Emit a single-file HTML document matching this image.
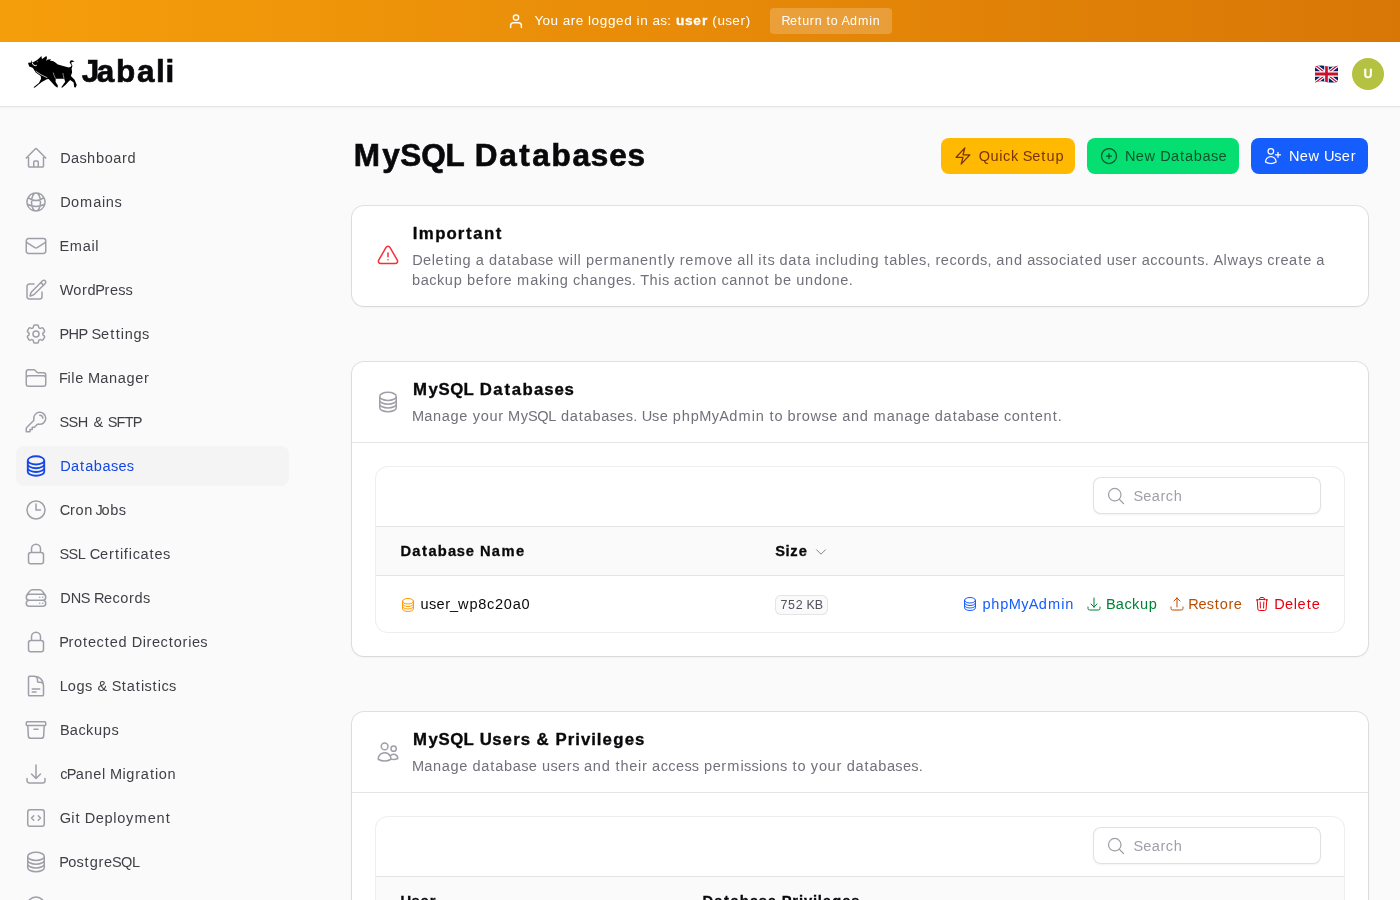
<!DOCTYPE html><html><head><meta charset="utf-8">
<style>
*{box-sizing:border-box;margin:0;padding:0}
html{will-change:transform}
html,body{width:1400px;height:900px;overflow:hidden}
body{background:#fafafa;font-family:"Liberation Sans",sans-serif;color:#09090b;position:relative;font-size:14px;line-height:20px}
.abs{position:absolute}
svg{display:block}
.ic{fill:none;stroke:currentColor;stroke-width:1.5;stroke-linecap:round;stroke-linejoin:round}
/* banner */
#banner{left:0;top:0;width:1400px;height:42px;background:linear-gradient(to right,#f59e0b,#d97706);color:#fff}
#banner .txt{left:536px;top:11px;font-size:13px;line-height:20px;white-space:nowrap}
#banner .btn{left:770px;top:8px;width:122px;height:26px;border-radius:4px;background:rgba(255,255,255,.2);font-size:12px;line-height:26px;text-align:center;white-space:nowrap}
/* header */
#hdr{left:0;top:42px;width:1400px;height:65px;background:#fff;border-bottom:1px solid #e5e5e5;box-shadow:0 1px 2px rgba(0,0,0,.04)}
#logo-t{left:85px;top:12px;font-size:30px;line-height:36px;font-weight:700;letter-spacing:-0.75px;white-space:nowrap}
.avatar{left:1352px;top:16px;width:32px;height:32px;border-radius:50%;background:#b5c140;color:#fff;font-size:12px;font-weight:700;text-align:center;line-height:32px}
/* sidebar */
.nav{left:16px;width:273px;height:40px;border-radius:8px;color:#3f3f46;white-space:nowrap}
.nav svg{position:absolute;left:8px;top:8px;width:24px;height:24px;color:#9f9fa9}
.nav span{position:absolute;left:44px;top:10px;font-size:14px;line-height:20px}
.nav.act{background:#f4f4f5;color:#1447e6}
.nav.act svg{color:#1447e6}
/* main */
h1{position:absolute;left:352px;top:138px;font-size:30px;line-height:36px;font-weight:700;letter-spacing:-0.75px;white-space:nowrap;color:#09090b}
.btn{position:absolute;top:138px;height:36px;border-radius:8px;white-space:nowrap;font-size:14px;line-height:20px}
.btn svg{position:absolute;left:12px;top:8px;width:20px;height:20px}
.btn span{position:absolute;left:38px;top:8px}
.card{position:absolute;left:352px;width:1016px;background:#fff;border-radius:12px;box-shadow:0 0 0 1px rgba(9,9,11,.1),0 1px 3px rgba(0,0,0,.06)}
.hd-ic{position:absolute;left:24px;width:24px;height:24px;color:#9f9fa9}
.hd-t{position:absolute;left:60px;font-size:16px;line-height:24px;font-weight:700;white-space:nowrap}
.hd-d{position:absolute;left:60px;font-size:14px;line-height:20px;color:#71717b;width:932px}
.sep{position:absolute;left:0;width:1016px;height:1px;background:#e4e4e7}
.inner{position:absolute;left:24px;width:968px;background:#fff;border-radius:12px;box-shadow:0 0 0 1px rgba(9,9,11,.07)}
.search{position:absolute;left:717px;top:10px;width:228px;height:37px;border-radius:8px;background:#fff;box-shadow:inset 0 0 0 1px rgba(9,9,11,.12),0 1px 2px rgba(0,0,0,.05)}
.search svg{position:absolute;left:13px;top:8.5px;width:20px;height:20px;color:#9f9fa9}
.search span{position:absolute;left:41px;top:8.5px;color:#9f9fa9;font-size:14px;line-height:20px;white-space:nowrap}
.thead{position:absolute;left:0;width:968px;height:50px;background:#fafafa;border-top:1px solid #e4e4e7;border-bottom:1px solid #e4e4e7}
.th{position:absolute;top:14px;font-size:14px;line-height:20px;font-weight:700;white-space:nowrap}
.act-l{position:absolute;top:0;height:20px;font-size:14px;line-height:20px;white-space:nowrap}
.act-l svg{position:absolute;left:0;top:2px;width:16px;height:16px}
.act-l span{position:absolute;left:20px;top:0}

body{font-kerning:none}
i{font-style:normal}</style></head><body>

<!-- banner -->
<div id="banner" class="abs">
  <svg class="abs" style="left:504px;top:10px;width:24px;height:22px" viewBox="0 0 24 22"><circle cx="12" cy="7.6" r="2.65" fill="none" stroke="#fff" stroke-width="1.35"></circle><path d="M6.6,17.6 V15.6 Q6.6,12.7 9.6,12.7 H14.4 Q17.4,12.7 17.4,15.6 V17.6" fill="none" stroke="#fff" stroke-width="1.45" stroke-linecap="round"></path></svg>
  <div class="abs txt" style="font-size: 13.52px;"><i style="letter-spacing: -1.19px; margin-left: -1.4px;">Y</i><i style="letter-spacing: 0.58px;">o</i><i style="letter-spacing: 0.55px;">u</i><i style="letter-spacing: 0.41px;"> </i><i style="letter-spacing: 0.51px;">a</i><i style="letter-spacing: 0.52px;">r</i><i style="letter-spacing: 0.43px;">e</i><i style="letter-spacing: 0.48px;"> </i><i style="letter-spacing: 0.52px;">l</i><i style="letter-spacing: 0.59px;">o</i><i style="letter-spacing: 0.73px;">g</i><i style="letter-spacing: 0.61px;">g</i><i style="letter-spacing: 0.61px;">e</i><i style="letter-spacing: 0.56px;">d</i><i style="letter-spacing: 0.5px;"> </i><i style="letter-spacing: 0.66px;">i</i><i style="letter-spacing: 0.55px;">n</i><i style="letter-spacing: 0.42px;"> </i><i style="letter-spacing: 0.23px;">a</i><i style="letter-spacing: 0.31px;">s</i><i style="letter-spacing: 0.5px;">:</i><i style="letter-spacing: 0.2px;"> </i><b style="font-size: 13.65px; -webkit-text-stroke: 0.279px;"><i style="letter-spacing: 0.54px; margin-left: 0.46px;">u</i><i style="letter-spacing: 0.69px;">s</i><i style="letter-spacing: 1.16px;">e</i><i style="letter-spacing: 0.55px;">r</i></b><i style="letter-spacing: 0.48px; margin-left: 0.19px;"> </i><i style="letter-spacing: 0.65px;">(</i><i style="letter-spacing: 0.37px;">u</i><i style="letter-spacing: 0.24px;">s</i><i style="letter-spacing: 0.66px;">e</i><i style="letter-spacing: 0.71px;">r</i><i style="letter-spacing: 0.29px;">)</i></div>
  <div class="abs btn" style="font-size: 12.48px;"><i style="letter-spacing: -0.38px; margin-left: -0.6px;">R</i><i style="letter-spacing: 0.84px;">e</i><i style="letter-spacing: 0.96px;">t</i><i style="letter-spacing: 0.62px;">u</i><i style="letter-spacing: 0.62px;">r</i><i style="letter-spacing: 0.52px;">n</i><i style="letter-spacing: 0.8px;"> </i><i style="letter-spacing: 0.82px;">t</i><i style="letter-spacing: 0.38px;">o</i><i style="letter-spacing: 0.02px;"> </i><i style="letter-spacing: 0.19px;">A</i><i style="letter-spacing: 1px;">d</i><i style="letter-spacing: 0.93px;">m</i><i style="letter-spacing: 0.61px;">i</i><i style="letter-spacing: 0.34px;">n</i></div>
</div>

<!-- header -->
<div id="hdr" class="abs">
  <svg class="abs" style="left:24px;top:10px;width:58px;height:40px" viewBox="0 0 58 40">
    <path fill="#000" d="M4.1,11.3 L4.4,10.8 L7.1,10.5 L7.3,8.1 L8.1,10.6 L9.2,10.2 L13.1,8.1 L14.9,6.6 L17.4,4.1 L17.8,6.6 L18.1,7 L19.2,6.3 L22.4,4 L23,5.9 L22.1,8.8 L23.9,7.4 L27.1,7.2 L26,8.8 L28.9,9.1 L31,10.2 L33.9,12.4 L40,14.2 L44.9,15.6 L46.8,14.8 L47.6,13.2 L46.4,11.8 L45.6,10.2 L46.6,8.6 L48.1,8.3 L50.6,9.4 L48.5,9.9 L47.2,10.6 L47.5,11.8 L48.4,13.4 L48.1,15.2 L47.6,16.5 L48.1,20.3 L46.9,23.9 L50.6,27.8 L52.8,33.1 L51.4,35.7 L50.2,34.9 L49.6,30.5 L46.2,28 L44.6,29.6 L41.7,32.8 L38.1,35.8 L37.3,35.3 L41.2,29.8 L40.2,26.7 L38.9,26.7 L31.7,26.7 L31.6,30 L33.9,33.4 L33.5,35.7 L31,34 L27.4,30 L24.6,26.9 L22.8,27.2 L17.8,30 L10.6,35.7 L9.5,35.3 L14.9,31 L17.1,26.7 L16.7,23.9 L11.7,20.6 L8.9,16 L7.3,15.3 L5.2,14.5 Z"></path>
    <path fill="none" stroke="#fff" stroke-width="1" stroke-linecap="round" d="M8.3,11.2 Q9,13.6 11.3,13.7 L12.4,13.3"></path><circle cx="13.5" cy="9.7" r="0.45" fill="#fff"></circle>
    <path fill="none" stroke="#fff" stroke-width="0.7" stroke-linecap="round" d="M12,19.4 L17,22.7 L23,25.6"></path>
    <path fill="none" stroke="#fff" stroke-width="0.5" d="M29.2,20.6 L30.2,23.5 L31.5,26.6 M38.9,21 L39.3,23.5 L40.1,26.6"></path>
  </svg>
  <div id="logo-t" class="abs" style="font-size: 31.5px; -webkit-text-stroke: 0.643px;"><i style="letter-spacing: -2.57px; margin-left: -3.18px; position: relative; top: -1px;">J</i><i style="letter-spacing: 1.73px; position: relative; top: -1px;">a</i><i style="letter-spacing: 1.73px; position: relative; top: -1px;">b</i><i style="letter-spacing: 1.38px; position: relative; top: -1px;">a</i><i style="letter-spacing: 0.79px; position: relative; top: -1px;">l</i><i style="letter-spacing: 0.02px; position: relative; top: -1px;">i</i></div>
  <svg class="abs" style="left:1315px;top:23px;width:23px;height:18px" viewBox="0 0 60 40" preserveAspectRatio="none">
    <clipPath id="fl"><path d="M0,3 Q15,-1 30,2.5 T60,1.5 L60,37 Q45,41 30,37.5 T0,39 Z"></path></clipPath>
    <g clip-path="url(#fl)">
      <rect width="60" height="40" fill="#012169"></rect>
      <path d="M0,0 L60,40 M60,0 L0,40" stroke="#fff" stroke-width="8"></path>
      <path d="M0,0 L60,40 M60,0 L0,40" stroke="#C8102E" stroke-width="3"></path>
      <path d="M30,0 V40 M0,20 H60" stroke="#fff" stroke-width="12"></path>
      <path d="M30,0 V40 M0,20 H60" stroke="#C8102E" stroke-width="7"></path>
    </g>
  </svg>
  <div class="abs avatar" style="font-size: 12.6px; -webkit-text-stroke: 0.257px;"><i style="letter-spacing: 0.32px; margin-left: 0.32px;">U</i></div>
</div>

<!-- sidebar -->
<div class="abs nav" style="top:138px"><svg class="ic" viewBox="0 0 24 24"><path d="m2.25 12 8.954-8.955c.44-.439 1.152-.439 1.591 0L21.75 12M4.5 9.75v10.125c0 .621.504 1.125 1.125 1.125H9.75v-4.875c0-.621.504-1.125 1.125-1.125h2.25c.621 0 1.125.504 1.125 1.125V21h4.125c.621 0 1.125-.504 1.125-1.125V9.75M8.25 21h8.25"></path></svg><span style="font-size: 14.56px;"><i style="letter-spacing: 0.38px; margin-left: 0.13px;">D</i><i style="letter-spacing: 0.26px;">a</i><i style="letter-spacing: 0.41px;">s</i><i style="letter-spacing: 0.79px;">h</i><i style="letter-spacing: 0.64px;">b</i><i style="letter-spacing: 0.48px;">o</i><i style="letter-spacing: 0.58px;">a</i><i style="letter-spacing: 0.73px;">r</i><i style="letter-spacing: 0.4px;">d</i></span></div>
<div class="abs nav" style="top:182px"><svg class="ic" viewBox="0 0 24 24"><path d="M12 21a9.004 9.004 0 0 0 8.716-6.747M12 21a9.004 9.004 0 0 1-8.716-6.747M12 21c2.485 0 4.5-4.03 4.5-9S14.485 3 12 3m0 18c-2.485 0-4.5-4.03-4.5-9S9.515 3 12 3m0 0a8.997 8.997 0 0 1 7.843 4.582M12 3a8.997 8.997 0 0 0-7.843 4.582m15.686 0A11.953 11.953 0 0 1 12 10.5c-2.998 0-5.74-1.1-7.843-2.918m15.686 0A8.959 8.959 0 0 1 21 12c0 .778-.099 1.533-.284 2.253m0 0A17.919 17.919 0 0 1 12 16.5c-3.162 0-6.133-.815-8.716-2.247m0 0A9.015 9.015 0 0 1 3 12c0-1.605.42-3.113 1.157-4.418"></path></svg><span style="font-size: 14.56px;"><i style="letter-spacing: 0.38px; margin-left: 0.13px;">D</i><i style="letter-spacing: 1px;">o</i><i style="letter-spacing: 1px;">m</i><i style="letter-spacing: 0.57px;">a</i><i style="letter-spacing: 0.72px;">i</i><i style="letter-spacing: 0.41px;">n</i><i style="letter-spacing: 0.02px;">s</i></span></div>
<div class="abs nav" style="top:226px"><svg class="ic" viewBox="0 0 24 24"><path d="M21.75 6.75v10.5a2.25 2.25 0 0 1-2.25 2.25h-15a2.25 2.25 0 0 1-2.25-2.25V6.75m19.5 0A2.25 2.25 0 0 0 19.5 4.5h-15a2.25 2.25 0 0 0-2.25 2.25m19.5 0v.243a2.25 2.25 0 0 1-1.07 1.916l-7.5 4.615a2.25 2.25 0 0 1-2.36 0L3.32 8.91a2.25 2.25 0 0 1-1.07-1.916V6.75"></path></svg><span style="font-size: 14.56px;"><i style="letter-spacing: 0.33px; margin-left: -0.42px;">E</i><i style="letter-spacing: 0.99px;">m</i><i style="letter-spacing: 0.57px;">a</i><i style="letter-spacing: 0.66px;">i</i><i style="letter-spacing: 0.34px;">l</i></span></div>
<div class="abs nav" style="top:270px"><svg class="ic" viewBox="0 0 24 24"><path d="m16.862 4.487 1.687-1.688a1.875 1.875 0 1 1 2.652 2.652L10.582 16.07a4.5 4.5 0 0 1-1.897 1.13L6 18l.8-2.685a4.5 4.5 0 0 1 1.13-1.897l8.932-8.931Zm0 0L19.5 7.125M18 14v4.75A2.25 2.25 0 0 1 15.75 21H5.25A2.25 2.25 0 0 1 3 18.75V8.25A2.25 2.25 0 0 1 5.25 6H10"></path></svg><span style="font-size: 14.56px;"><i style="letter-spacing: -0.12px; margin-left: -0.35px;">W</i><i style="letter-spacing: 0.57px;">o</i><i style="letter-spacing: 0.73px;">r</i><i style="letter-spacing: -0.36px;">d</i><i style="letter-spacing: -0.45px;">P</i><i style="letter-spacing: 0.56px;">r</i><i style="letter-spacing: 0.27px;">e</i><i style="letter-spacing: 0.02px;">s</i><i style="letter-spacing: 0.01px;">s</i></span></div>
<div class="abs nav" style="top:314px"><svg class="ic" viewBox="0 0 24 24"><path d="M9.594 3.94c.09-.542.56-.94 1.11-.94h2.593c.55 0 1.02.398 1.11.94l.213 1.281c.063.374.313.686.645.87.074.04.147.083.22.127.325.196.72.257 1.075.124l1.217-.456a1.125 1.125 0 0 1 1.37.49l1.296 2.247a1.125 1.125 0 0 1-.26 1.431l-1.003.827c-.293.241-.438.613-.43.992a7.723 7.723 0 0 1 0 .255c-.008.378.137.75.43.991l1.004.827c.424.35.534.955.26 1.43l-1.298 2.247a1.125 1.125 0 0 1-1.369.491l-1.217-.456c-.355-.133-.75-.072-1.076.124a6.47 6.47 0 0 1-.22.128c-.331.183-.581.495-.644.869l-.213 1.281c-.09.543-.56.94-1.11.94h-2.594c-.55 0-1.019-.398-1.11-.94l-.213-1.281c-.062-.374-.312-.686-.644-.87a6.52 6.52 0 0 1-.22-.127c-.325-.196-.72-.257-1.076-.124l-1.217.456a1.125 1.125 0 0 1-1.369-.49l-1.297-2.247a1.125 1.125 0 0 1 .26-1.431l1.004-.827c.292-.24.437-.613.43-.991a6.932 6.932 0 0 1 0-.255c.007-.38-.138-.751-.43-.992l-1.004-.827a1.125 1.125 0 0 1-.26-1.43l1.297-2.247a1.125 1.125 0 0 1 1.37-.491l1.216.456c.356.133.751.072 1.076-.124.072-.044.146-.086.22-.128.332-.183.582-.495.644-.869l.214-1.28Z"></path><path d="M15 12a3 3 0 1 1-6 0 3 3 0 0 1 6 0Z"></path></svg><span style="font-size: 14.56px;"><i style="letter-spacing: -0.62px; margin-left: -0.62px;">P</i><i style="letter-spacing: -0.62px;">H</i><i style="letter-spacing: -0.42px;">P</i><i style="letter-spacing: -0.2px;"> </i><i style="letter-spacing: -0.15px;">S</i><i style="letter-spacing: 0.98px;">e</i><i style="letter-spacing: 1.44px;">t</i><i style="letter-spacing: 1.05px;">t</i><i style="letter-spacing: 0.73px;">i</i><i style="letter-spacing: 0.79px;">n</i><i style="letter-spacing: 0.41px;">g</i><i style="letter-spacing: 0.02px;">s</i></span></div>
<div class="abs nav" style="top:358px"><svg class="ic" viewBox="0 0 24 24"><path d="M2.25 12.75V12A2.25 2.25 0 0 1 4.5 9.75h15A2.25 2.25 0 0 1 21.75 12v.75m-8.69-6.44-2.12-2.12a1.5 1.5 0 0 0-1.061-.44H4.5A2.25 2.25 0 0 0 2.25 6v12a2.25 2.25 0 0 0 2.25 2.25h15A2.25 2.25 0 0 0 21.75 18V9a2.25 2.25 0 0 0-2.25-2.25h-5.379a1.5 1.5 0 0 1-1.06-.44Z"></path></svg><span style="font-size: 14.56px;"><i style="letter-spacing: -0.59px; margin-left: -0.92px;">F</i><i style="letter-spacing: 0.66px;">i</i><i style="letter-spacing: 0.59px;">l</i><i style="letter-spacing: 0.47px;">e</i><i style="letter-spacing: 0.19px;"> </i><i style="letter-spacing: 0.22px;">M</i><i style="letter-spacing: 0.64px;">a</i><i style="letter-spacing: 0.64px;">n</i><i style="letter-spacing: 0.63px;">a</i><i style="letter-spacing: 0.66px;">g</i><i style="letter-spacing: 0.72px;">e</i><i style="letter-spacing: 0.45px;">r</i></span></div>
<div class="abs nav" style="top:402px"><svg class="ic" viewBox="0 0 24 24"><path d="M15.75 5.25a3 3 0 0 1 3 3m3 0a6 6 0 0 1-7.029 5.912c-.563-.097-1.159.026-1.563.43L10.5 17.25H8.25v2.25H6v2.25H2.25v-2.818c0-.597.237-1.17.659-1.591l6.499-6.499c.404-.404.527-1 .43-1.563A6 6 0 1 1 21.75 8.25Z"></path></svg><span style="font-size: 14.56px;"><i style="letter-spacing: -0.81px; margin-left: -0.41px;">S</i><i style="letter-spacing: -0.4px;">S</i><i style="letter-spacing: 0.22px;">H</i><i style="letter-spacing: 0.81px;"> </i><i style="letter-spacing: 0.8px;">&amp;</i><i style="letter-spacing: -0.2px;"> </i><i style="letter-spacing: -0.95px;">S</i><i style="letter-spacing: -0.7px;">F</i><i style="letter-spacing: -0.79px;">T</i><i style="letter-spacing: -0.63px;">P</i></span></div>
<div class="abs nav act" style="top:446px"><svg class="ic" style="stroke-width:1.8" viewBox="0 0 24 24"><path d="M20.25 6.375c0 2.278-3.694 4.125-8.25 4.125S3.75 8.653 3.75 6.375m16.5 0c0-2.278-3.694-4.125-8.25-4.125S3.75 4.097 3.75 6.375m16.5 0v11.25c0 2.278-3.694 4.125-8.25 4.125s-8.25-1.847-8.25-4.125V6.375m16.5 0v3.75m-16.5-3.75v3.75m16.5 0v3.75C20.25 16.153 16.556 18 12 18s-8.25-1.847-8.25-4.125v-3.75m16.5 0c0 2.278-3.694 4.125-8.25 4.125s-8.25-1.847-8.25-4.125"></path></svg><span style="font-size: 14.56px;"><i style="letter-spacing: 0.38px; margin-left: 0.13px;">D</i><i style="letter-spacing: 0.98px;">a</i><i style="letter-spacing: 0.98px;">t</i><i style="letter-spacing: 0.64px;">a</i><i style="letter-spacing: 0.64px;">b</i><i style="letter-spacing: 0.25px;">a</i><i style="letter-spacing: 0.27px;">s</i><i style="letter-spacing: 0.28px;">e</i><i style="letter-spacing: 0.02px;">s</i></span></div>
<div class="abs nav" style="top:490px"><svg class="ic" viewBox="0 0 24 24"><path d="M12 6v6h4.5m4.5 0a9 9 0 1 1-18 0 9 9 0 0 1 18 0Z"></path></svg><span style="font-size: 14.56px;"><i style="letter-spacing: -0.06px; margin-left: -0.37px;">C</i><i style="letter-spacing: 0.54px;">r</i><i style="letter-spacing: 0.63px;">o</i><i style="letter-spacing: 0.6px;">n</i><i style="letter-spacing: -1.38px;"> </i><i style="letter-spacing: -1.34px;">J</i><i style="letter-spacing: 0.64px;">o</i><i style="letter-spacing: 0.41px;">b</i><i style="letter-spacing: 0.01px;">s</i></span></div>
<div class="abs nav" style="top:534px"><svg class="ic" viewBox="0 0 24 24"><path d="M16.5 10.5V6.75a4.5 4.5 0 1 0-9 0v3.75m-.75 11.25h10.5a2.25 2.25 0 0 0 2.25-2.25v-6.75a2.25 2.25 0 0 0-2.25-2.25H6.75a2.25 2.25 0 0 0-2.25 2.25v6.75a2.25 2.25 0 0 0 2.25 2.25Z"></path></svg><span style="font-size: 14.56px;"><i style="letter-spacing: -0.81px; margin-left: -0.41px;">S</i><i style="letter-spacing: -0.55px;">S</i><i style="letter-spacing: 0.05px;">L</i><i style="letter-spacing: -0.16px;"> </i><i style="letter-spacing: -0.1px;">C</i><i style="letter-spacing: 0.71px;">e</i><i style="letter-spacing: 1.18px;">r</i><i style="letter-spacing: 1.05px;">t</i><i style="letter-spacing: 0.52px;">i</i><i style="letter-spacing: 0.78px;">f</i><i style="letter-spacing: 0.79px;">i</i><i style="letter-spacing: 0.46px;">c</i><i style="letter-spacing: 0.98px;">a</i><i style="letter-spacing: 0.98px;">t</i><i style="letter-spacing: 0.27px;">e</i><i style="letter-spacing: 0.02px;">s</i></span></div>
<div class="abs nav" style="top:578px"><svg class="ic" viewBox="0 0 24 24"><path d="M5.25 14.25h13.5m-13.5 0a3 3 0 0 1-3-3m3 3a3 3 0 1 0 0 6h13.5a3 3 0 1 0 0-6m-16.5-3a3 3 0 0 1 3-3h13.5a3 3 0 0 1 3 3m-19.5 0a4.5 4.5 0 0 1 .9-2.7L5.737 5.1a3.375 3.375 0 0 1 2.7-1.35h7.126c1.062 0 2.062.5 2.7 1.35l2.587 3.45a4.5 4.5 0 0 1 .9 2.7m0 0a3 3 0 0 1-3 3m0 3h.008v.008h-.008v-.008Zm0-6h.008v.008h-.008v-.008Zm-3 6h.008v.008h-.008v-.008Zm0-6h.008v.008h-.008v-.008Z"></path></svg><span style="font-size: 14.56px;"><i style="letter-spacing: 0.12px; margin-left: 0.13px;">D</i><i style="letter-spacing: -0.42px;">N</i><i style="letter-spacing: -0.21px;">S</i><i style="letter-spacing: -0.49px;"> </i><i style="letter-spacing: -0.44px;">R</i><i style="letter-spacing: 0.47px;">e</i><i style="letter-spacing: 0.45px;">c</i><i style="letter-spacing: 0.57px;">o</i><i style="letter-spacing: 0.73px;">r</i><i style="letter-spacing: 0.41px;">d</i><i style="letter-spacing: 0.01px;">s</i></span></div>
<div class="abs nav" style="top:622px"><svg class="ic" viewBox="0 0 24 24"><path d="M16.5 10.5V6.75a4.5 4.5 0 1 0-9 0v3.75m-.75 11.25h10.5a2.25 2.25 0 0 0 2.25-2.25v-6.75a2.25 2.25 0 0 0-2.25-2.25H6.75a2.25 2.25 0 0 0-2.25 2.25v6.75a2.25 2.25 0 0 0 2.25 2.25Z"></path></svg><span style="font-size: 14.56px;"><i style="letter-spacing: -0.45px; margin-left: -0.75px;">P</i><i style="letter-spacing: 0.54px;">r</i><i style="letter-spacing: 0.95px;">o</i><i style="letter-spacing: 0.98px;">t</i><i style="letter-spacing: 0.48px;">e</i><i style="letter-spacing: 0.94px;">c</i><i style="letter-spacing: 0.98px;">t</i><i style="letter-spacing: 0.66px;">e</i><i style="letter-spacing: 0.6px;">d</i><i style="letter-spacing: 0.34px;"> </i><i style="letter-spacing: 0.47px;">D</i><i style="letter-spacing: 0.63px;">i</i><i style="letter-spacing: 0.56px;">r</i><i style="letter-spacing: 0.47px;">e</i><i style="letter-spacing: 0.94px;">c</i><i style="letter-spacing: 0.96px;">t</i><i style="letter-spacing: 0.7px;">o</i><i style="letter-spacing: 0.78px;">r</i><i style="letter-spacing: 0.59px;">i</i><i style="letter-spacing: 0.28px;">e</i><i style="letter-spacing: 0.02px;">s</i></span></div>
<div class="abs nav" style="top:666px"><svg class="ic" viewBox="0 0 24 24"><path d="M19.5 14.25v-2.625a3.375 3.375 0 0 0-3.375-3.375h-1.5A1.125 1.125 0 0 1 13.5 7.125v-1.5a3.375 3.375 0 0 0-3.375-3.375H8.25m0 12.75h7.5m-7.5 3H12M10.5 2.25H5.625c-.621 0-1.125.504-1.125 1.125v17.25c0 .621.504 1.125 1.125 1.125h12.75c.621 0 1.125-.504 1.125-1.125V11.25a9 9 0 0 0-9-9Z"></path></svg><span style="font-size: 14.56px;"><i style="letter-spacing: -0.03px; margin-left: -0.27px;">L</i><i style="letter-spacing: 0.63px;">o</i><i style="letter-spacing: 0.41px;">g</i><i style="letter-spacing: 0.21px;">s</i><i style="letter-spacing: 0.8px;"> </i><i style="letter-spacing: 0.81px;">&amp;</i><i style="letter-spacing: -0.2px;"> </i><i style="letter-spacing: 0.32px;">S</i><i style="letter-spacing: 0.97px;">t</i><i style="letter-spacing: 0.96px;">a</i><i style="letter-spacing: 1.05px;">t</i><i style="letter-spacing: 0.34px;">i</i><i style="letter-spacing: 0.73px;">s</i><i style="letter-spacing: 1.05px;">t</i><i style="letter-spacing: 0.55px;">i</i><i style="letter-spacing: 0.23px;">c</i><i style="letter-spacing: 0.01px;">s</i></span></div>
<div class="abs nav" style="top:710px"><svg class="ic" viewBox="0 0 24 24"><path d="m20.25 7.5-.625 10.632a2.25 2.25 0 0 1-2.247 2.118H6.622a2.25 2.25 0 0 1-2.247-2.118L3.75 7.5M10 11.25h4M3.375 7.5h17.25c.621 0 1.125-.504 1.125-1.125v-1.5c0-.621-.504-1.125-1.125-1.125H3.375c-.621 0-1.125.504-1.125 1.125v1.5c0 .621.504 1.125 1.125 1.125Z"></path></svg><span style="font-size: 14.56px;"><i style="letter-spacing: 0.2px; margin-left: -0.05px;">B</i><i style="letter-spacing: 0.45px;">a</i><i style="letter-spacing: 0.41px;">c</i><i style="letter-spacing: 0.59px;">k</i><i style="letter-spacing: 0.79px;">u</i><i style="letter-spacing: 0.41px;">p</i><i style="letter-spacing: 0.02px;">s</i></span></div>
<div class="abs nav" style="top:754px"><svg class="ic" viewBox="0 0 24 24"><path d="M3 16.5v2.25A2.25 2.25 0 0 0 5.25 21h13.5A2.25 2.25 0 0 0 21 18.75V16.5M16.5 12 12 16.5m0 0L7.5 12m4.5 4.5V3"></path></svg><span style="font-size: 14.56px;"><i style="letter-spacing: -0.73px; margin-left: 0.21px;">c</i><i style="letter-spacing: -0.7px;">P</i><i style="letter-spacing: 0.63px;">a</i><i style="letter-spacing: 0.66px;">n</i><i style="letter-spacing: 0.59px;">e</i><i style="letter-spacing: 0.53px;">l</i><i style="letter-spacing: 0.19px;"> </i><i style="letter-spacing: 0.31px;">M</i><i style="letter-spacing: 0.73px;">i</i><i style="letter-spacing: 0.85px;">g</i><i style="letter-spacing: 0.7px;">r</i><i style="letter-spacing: 0.98px;">a</i><i style="letter-spacing: 1.06px;">t</i><i style="letter-spacing: 0.56px;">i</i><i style="letter-spacing: 0.62px;">o</i><i style="letter-spacing: 0.39px;">n</i></span></div>
<div class="abs nav" style="top:798px"><svg class="ic" viewBox="0 0 24 24"><path d="M14.25 9.75 16.5 12l-2.25 2.25m-4.5 0L7.5 12l2.25-2.25M6 20.25h12A2.25 2.25 0 0 0 20.25 18V6A2.25 2.25 0 0 0 18 3.75H6A2.25 2.25 0 0 0 3.75 6v12A2.25 2.25 0 0 0 6 20.25Z"></path></svg><span style="font-size: 14.56px;"><i style="letter-spacing: 0.09px; margin-left: -0.23px;">G</i><i style="letter-spacing: 1.05px;">i</i><i style="letter-spacing: 0.93px;">t</i><i style="letter-spacing: 0.34px;"> </i><i style="letter-spacing: 0.4px;">D</i><i style="letter-spacing: 0.66px;">e</i><i style="letter-spacing: 0.73px;">p</i><i style="letter-spacing: 0.57px;">l</i><i style="letter-spacing: 0.74px;">o</i><i style="letter-spacing: 1.27px;">y</i><i style="letter-spacing: 1.02px;">m</i><i style="letter-spacing: 0.65px;">e</i><i style="letter-spacing: 1.11px;">n</i><i style="letter-spacing: 0.72px;">t</i></span></div>
<div class="abs nav" style="top:842px"><svg class="ic" viewBox="0 0 24 24"><path d="M20.25 6.375c0 2.278-3.694 4.125-8.25 4.125S3.75 8.653 3.75 6.375m16.5 0c0-2.278-3.694-4.125-8.25-4.125S3.75 4.097 3.75 6.375m16.5 0v11.25c0 2.278-3.694 4.125-8.25 4.125s-8.25-1.847-8.25-4.125V6.375m16.5 0v3.75m-16.5-3.75v3.75m16.5 0v3.75C20.25 16.153 16.556 18 12 18s-8.25-1.847-8.25-4.125v-3.75m16.5 0c0 2.278-3.694 4.125-8.25 4.125s-8.25-1.847-8.25-4.125"></path></svg><span style="font-size: 14.56px;"><i style="letter-spacing: -0.64px; margin-left: -0.88px;">P</i><i style="letter-spacing: 0.24px;">o</i><i style="letter-spacing: 0.73px;">s</i><i style="letter-spacing: 1.12px;">t</i><i style="letter-spacing: 0.7px;">g</i><i style="letter-spacing: 0.56px;">r</i><i style="letter-spacing: -0.15px;">e</i><i style="letter-spacing: -0.55px;">S</i><i style="letter-spacing: -0.3px;">Q</i><i style="letter-spacing: -0.15px;">L</i></span></div>
<div class="abs nav" style="top:886px"><svg class="ic" viewBox="0 0 24 24"><path d="M17.982 18.725A7.483 7.483 0 0 0 12 15.75a7.483 7.483 0 0 0-5.982 2.975m11.964 0a9 9 0 1 0-11.963 0m11.963 0A8.966 8.966 0 0 1 12 21a8.966 8.966 0 0 1-5.982-2.275M15 9.75a3 3 0 1 1-6 0 3 3 0 0 1 6 0Z"></path></svg><span style="font-size: 14.56px;"><i style="letter-spacing: -0.12px; margin-left: -0.13px;">U</i><i style="letter-spacing: 0.27px;">s</i><i style="letter-spacing: 0.72px;">e</i><i style="letter-spacing: 0.47px;">r</i><i style="letter-spacing: 0.01px;">s</i></span></div>

<!-- MAIN -->
<h1 style="font-size: 31.5px; -webkit-text-stroke: 0.643px;"><i style="letter-spacing: 2.08px; margin-left: 1.8px; position: relative; top: -1px;">M</i><i style="letter-spacing: 0.56px; position: relative; top: -1px;">y</i><i style="letter-spacing: 0.05px; position: relative; top: -1px;">S</i><i style="letter-spacing: -0.3px; position: relative; top: -1px;">Q</i><i style="letter-spacing: 0.04px; position: relative; top: -1px;">L</i><i style="letter-spacing: 1.17px; position: relative; top: -1px;"> </i><i style="letter-spacing: 1.69px; position: relative; top: -1px;">D</i><i style="letter-spacing: 2.54px; position: relative; top: -1px;">a</i><i style="letter-spacing: 2.53px; position: relative; top: -1px;">t</i><i style="letter-spacing: 1.73px; position: relative; top: -1px;">a</i><i style="letter-spacing: 1.73px; position: relative; top: -1px;">b</i><i style="letter-spacing: 0.77px; position: relative; top: -1px;">a</i><i style="letter-spacing: 0.84px; position: relative; top: -1px;">s</i><i style="letter-spacing: 0.84px; position: relative; top: -1px;">e</i><i style="letter-spacing: -0.58px; position: relative; top: -1px;">s</i></h1>
<div class="btn" style="left:941px;width:134px;background:#ffb900;color:#7b3306"><svg class="ic" viewBox="0 0 24 24"><path d="m3.75 13.5 10.5-11.25L12 10.5h8.25L9.75 21.75 12 13.5H3.75Z"></path></svg><span style="font-size: 14.56px;"><i style="letter-spacing: 0.25px; margin-left: -0.15px;">Q</i><i style="letter-spacing: 0.73px;">u</i><i style="letter-spacing: 0.53px;">i</i><i style="letter-spacing: 0.62px;">c</i><i style="letter-spacing: 0.62px;">k</i><i style="letter-spacing: -0.2px;"> </i><i style="letter-spacing: -0.15px;">S</i><i style="letter-spacing: 0.98px;">e</i><i style="letter-spacing: 1.12px;">t</i><i style="letter-spacing: 0.79px;">u</i><i style="letter-spacing: 0.4px;">p</i></span></div>
<div class="btn" style="left:1087px;width:152px;background:#05df72;color:#0d542b"><svg class="ic" viewBox="0 0 24 24"><path d="M12 9v6m3-3H9m12 0a9 9 0 1 1-18 0 9 9 0 0 1 18 0Z"></path></svg><span style="font-size: 14.56px;"><i style="letter-spacing: 0.24px; margin-left: -0.02px;">N</i><i style="letter-spacing: 0.73px;">e</i><i style="letter-spacing: 0.68px;">w</i><i style="letter-spacing: 0.34px;"> </i><i style="letter-spacing: 0.38px;">D</i><i style="letter-spacing: 0.97px;">a</i><i style="letter-spacing: 0.97px;">t</i><i style="letter-spacing: 0.64px;">a</i><i style="letter-spacing: 0.64px;">b</i><i style="letter-spacing: 0.26px;">a</i><i style="letter-spacing: 0.27px;">s</i><i style="letter-spacing: 0.26px;">e</i></span></div>
<div class="btn" style="left:1251px;width:117px;background:#155dfc;color:#fff"><svg class="ic" viewBox="0 0 24 24"><path d="M18 7.5v3m0 0v3m0-3h3m-3 0h-3m-2.25-4.125a3.375 3.375 0 1 1-6.75 0 3.375 3.375 0 0 1 6.75 0ZM3 19.235v-.11a6.375 6.375 0 0 1 12.75 0v.109A12.318 12.318 0 0 1 9.374 21c-2.331 0-4.512-.645-6.374-1.766Z"></path></svg><span style="font-size: 14.56px;"><i style="letter-spacing: 0.24px; margin-left: -0.02px;">N</i><i style="letter-spacing: 0.73px;">e</i><i style="letter-spacing: 0.68px;">w</i><i style="letter-spacing: 0.07px;"> </i><i style="letter-spacing: -0.12px;">U</i><i style="letter-spacing: 0.27px;">s</i><i style="letter-spacing: 0.72px;">e</i><i style="letter-spacing: 0.46px;">r</i></span></div>

<!-- Important card -->
<div class="card" style="top:206px;height:100px">
  <svg class="hd-ic ic" style="top:38px;color:#fb2c36" viewBox="0 0 24 24"><path d="M12 9v3.75m-9.303 3.376c-.866 1.5.217 3.374 1.948 3.374h14.71c1.73 0 2.813-1.874 1.948-3.374L13.949 3.378c-.866-1.5-3.032-1.5-3.898 0L2.697 16.126ZM12 15.75h.007v.008H12v-.008Z"></path></svg>
  <div class="hd-t" style="top: 16px; font-size: 16.8px; -webkit-text-stroke: 0.343px;"><i style="letter-spacing: 1.52px; margin-left: 0.64px;">I</i><i style="letter-spacing: 1.48px;">m</i><i style="letter-spacing: 0.98px;">p</i><i style="letter-spacing: 1.05px;">o</i><i style="letter-spacing: 1.7px;">r</i><i style="letter-spacing: 1.76px;">t</i><i style="letter-spacing: 1.3px;">a</i><i style="letter-spacing: 1.6px;">n</i><i style="letter-spacing: 1.03px;">t</i></div>
  <div class="hd-d" style="top: 44px; font-size: 14.56px;"><i style="letter-spacing: 0.4px; margin-left: 0.13px;">D</i><i style="letter-spacing: 0.6px;">e</i><i style="letter-spacing: 0.59px;">l</i><i style="letter-spacing: 0.98px;">e</i><i style="letter-spacing: 1.05px;">t</i><i style="letter-spacing: 0.72px;">i</i><i style="letter-spacing: 0.8px;">n</i><i style="letter-spacing: 0.61px;">g</i><i style="letter-spacing: 0.45px;"> </i><i style="letter-spacing: 0.45px;">a</i><i style="letter-spacing: 0.6px;"> </i><i style="letter-spacing: 0.64px;">d</i><i style="letter-spacing: 0.97px;">a</i><i style="letter-spacing: 0.98px;">t</i><i style="letter-spacing: 0.64px;">a</i><i style="letter-spacing: 0.63px;">b</i><i style="letter-spacing: 0.26px;">a</i><i style="letter-spacing: 0.27px;">s</i><i style="letter-spacing: 0.46px;">e</i><i style="letter-spacing: 0.68px;"> </i><i style="letter-spacing: 0.8px;">w</i><i style="letter-spacing: 0.66px;">i</i><i style="letter-spacing: 0.66px;">l</i><i style="letter-spacing: 0.54px;">l</i><i style="letter-spacing: 0.6px;"> </i><i style="letter-spacing: 0.66px;">p</i><i style="letter-spacing: 0.59px;">e</i><i style="letter-spacing: 1.09px;">r</i><i style="letter-spacing: 1.01px;">m</i><i style="letter-spacing: 0.64px;">a</i><i style="letter-spacing: 0.65px;">n</i><i style="letter-spacing: 0.65px;">e</i><i style="letter-spacing: 1.12px;">n</i><i style="letter-spacing: 1.05px;">t</i><i style="letter-spacing: 0.83px;">l</i><i style="letter-spacing: 0.72px;">y</i><i style="letter-spacing: 0.51px;"> </i><i style="letter-spacing: 0.55px;">r</i><i style="letter-spacing: 1.02px;">e</i><i style="letter-spacing: 1px;">m</i><i style="letter-spacing: 0.75px;">o</i><i style="letter-spacing: 0.77px;">v</i><i style="letter-spacing: 0.47px;">e</i><i style="letter-spacing: 0.45px;"> </i><i style="letter-spacing: 0.57px;">a</i><i style="letter-spacing: 0.66px;">l</i><i style="letter-spacing: 0.54px;">l</i><i style="letter-spacing: 0.53px;"> </i><i style="letter-spacing: 1.05px;">i</i><i style="letter-spacing: 0.74px;">t</i><i style="letter-spacing: 0.21px;">s</i><i style="letter-spacing: 0.59px;"> </i><i style="letter-spacing: 0.64px;">d</i><i style="letter-spacing: 0.98px;">a</i><i style="letter-spacing: 0.98px;">t</i><i style="letter-spacing: 0.44px;">a</i><i style="letter-spacing: 0.52px;"> </i><i style="letter-spacing: 0.73px;">i</i><i style="letter-spacing: 0.61px;">n</i><i style="letter-spacing: 0.54px;">c</i><i style="letter-spacing: 0.72px;">l</i><i style="letter-spacing: 0.79px;">u</i><i style="letter-spacing: 0.73px;">d</i><i style="letter-spacing: 0.72px;">i</i><i style="letter-spacing: 0.79px;">n</i><i style="letter-spacing: 0.61px;">g</i><i style="letter-spacing: 0.93px;"> </i><i style="letter-spacing: 0.96px;">t</i><i style="letter-spacing: 0.64px;">a</i><i style="letter-spacing: 0.73px;">b</i><i style="letter-spacing: 0.59px;">l</i><i style="letter-spacing: 0.27px;">e</i><i style="letter-spacing: 0.22px;">s</i><i style="letter-spacing: 0.41px;">,</i><i style="letter-spacing: 0.5px;"> </i><i style="letter-spacing: 0.55px;">r</i><i style="letter-spacing: 0.48px;">e</i><i style="letter-spacing: 0.45px;">c</i><i style="letter-spacing: 0.57px;">o</i><i style="letter-spacing: 0.73px;">r</i><i style="letter-spacing: 0.41px;">d</i><i style="letter-spacing: 0.21px;">s</i><i style="letter-spacing: 0.41px;">,</i><i style="letter-spacing: 0.45px;"> </i><i style="letter-spacing: 0.64px;">a</i><i style="letter-spacing: 0.8px;">n</i><i style="letter-spacing: 0.6px;">d</i><i style="letter-spacing: 0.45px;"> </i><i style="letter-spacing: 0.25px;">a</i><i style="letter-spacing: 0.02px;">s</i><i style="letter-spacing: 0.25px;">s</i><i style="letter-spacing: 0.45px;">o</i><i style="letter-spacing: 0.54px;">c</i><i style="letter-spacing: 0.58px;">i</i><i style="letter-spacing: 0.97px;">a</i><i style="letter-spacing: 0.98px;">t</i><i style="letter-spacing: 0.66px;">e</i><i style="letter-spacing: 0.6px;">d</i><i style="letter-spacing: 0.6px;"> </i><i style="letter-spacing: 0.4px;">u</i><i style="letter-spacing: 0.27px;">s</i><i style="letter-spacing: 0.73px;">e</i><i style="letter-spacing: 0.66px;">r</i><i style="letter-spacing: 0.44px;"> </i><i style="letter-spacing: 0.46px;">a</i><i style="letter-spacing: 0.43px;">c</i><i style="letter-spacing: 0.45px;">c</i><i style="letter-spacing: 0.63px;">o</i><i style="letter-spacing: 0.79px;">u</i><i style="letter-spacing: 1.11px;">n</i><i style="letter-spacing: 0.73px;">t</i><i style="letter-spacing: 0.22px;">s</i><i style="letter-spacing: 0.4px;">.</i><i style="letter-spacing: 0.13px;"> </i><i style="letter-spacing: 0.27px;">A</i><i style="letter-spacing: 0.8px;">l</i><i style="letter-spacing: 0.71px;">w</i><i style="letter-spacing: 0.75px;">a</i><i style="letter-spacing: 0.52px;">y</i><i style="letter-spacing: 0.22px;">s</i><i style="letter-spacing: 0.42px;"> </i><i style="letter-spacing: 0.51px;">c</i><i style="letter-spacing: 0.56px;">r</i><i style="letter-spacing: 0.52px;">e</i><i style="letter-spacing: 0.97px;">a</i><i style="letter-spacing: 0.98px;">t</i><i style="letter-spacing: 0.47px;">e</i><i style="letter-spacing: 0.45px;"> </i><i style="letter-spacing: 0.45px;">a</i><i style="letter-spacing: 0.6px;"> </i><i style="letter-spacing: 0.65px;">b</i><i style="letter-spacing: 0.45px;">a</i><i style="letter-spacing: 0.41px;">c</i><i style="letter-spacing: 0.59px;">k</i><i style="letter-spacing: 0.78px;">u</i><i style="letter-spacing: 0.6px;">p</i><i style="letter-spacing: 0.61px;"> </i><i style="letter-spacing: 0.66px;">b</i><i style="letter-spacing: 0.7px;">e</i><i style="letter-spacing: 0.68px;">f</i><i style="letter-spacing: 0.54px;">o</i><i style="letter-spacing: 0.57px;">r</i><i style="letter-spacing: 0.47px;">e</i><i style="letter-spacing: 0.95px;"> </i><i style="letter-spacing: 1.01px;">m</i><i style="letter-spacing: 0.66px;">a</i><i style="letter-spacing: 0.74px;">k</i><i style="letter-spacing: 0.72px;">i</i><i style="letter-spacing: 0.8px;">n</i><i style="letter-spacing: 0.61px;">g</i><i style="letter-spacing: 0.41px;"> </i><i style="letter-spacing: 0.6px;">c</i><i style="letter-spacing: 0.63px;">h</i><i style="letter-spacing: 0.63px;">a</i><i style="letter-spacing: 0.79px;">n</i><i style="letter-spacing: 0.66px;">g</i><i style="letter-spacing: 0.27px;">e</i><i style="letter-spacing: 0.21px;">s</i><i style="letter-spacing: 0.41px;">.</i><i style="letter-spacing: 0.04px;"> </i><i style="letter-spacing: 0.23px;">T</i><i style="letter-spacing: 0.73px;">h</i><i style="letter-spacing: 0.34px;">i</i><i style="letter-spacing: 0.2px;">s</i><i style="letter-spacing: 0.45px;"> </i><i style="letter-spacing: 0.46px;">a</i><i style="letter-spacing: 0.93px;">c</i><i style="letter-spacing: 1.05px;">t</i><i style="letter-spacing: 0.57px;">i</i><i style="letter-spacing: 0.62px;">o</i><i style="letter-spacing: 0.59px;">n</i><i style="letter-spacing: 0.42px;"> </i><i style="letter-spacing: 0.46px;">c</i><i style="letter-spacing: 0.63px;">a</i><i style="letter-spacing: 0.78px;">n</i><i style="letter-spacing: 0.63px;">n</i><i style="letter-spacing: 0.96px;">o</i><i style="letter-spacing: 0.92px;">t</i><i style="letter-spacing: 0.6px;"> </i><i style="letter-spacing: 0.66px;">b</i><i style="letter-spacing: 0.47px;">e</i><i style="letter-spacing: 0.59px;"> </i><i style="letter-spacing: 0.78px;">u</i><i style="letter-spacing: 0.8px;">n</i><i style="letter-spacing: 0.63px;">d</i><i style="letter-spacing: 0.62px;">o</i><i style="letter-spacing: 0.66px;">n</i><i style="letter-spacing: 0.47px;">e</i><i style="letter-spacing: 0.2px;">.</i></div>
</div>

<!-- MySQL Databases section -->
<div class="card" style="top:362px;height:294px">
  <svg class="hd-ic ic" style="top:28px" viewBox="0 0 24 24"><path d="M20.25 6.375c0 2.278-3.694 4.125-8.25 4.125S3.75 8.653 3.75 6.375m16.5 0c0-2.278-3.694-4.125-8.25-4.125S3.75 4.097 3.75 6.375m16.5 0v11.25c0 2.278-3.694 4.125-8.25 4.125s-8.25-1.847-8.25-4.125V6.375m16.5 0v3.75m-16.5-3.75v3.75m16.5 0v3.75C20.25 16.153 16.556 18 12 18s-8.25-1.847-8.25-4.125v-3.75m16.5 0c0 2.278-3.694 4.125-8.25 4.125s-8.25-1.847-8.25-4.125"></path></svg>
  <div class="hd-t" style="top: 16px; font-size: 16.8px; -webkit-text-stroke: 0.343px;"><i style="letter-spacing: 1.52px; margin-left: 0.97px;">M</i><i style="letter-spacing: 0.71px;">y</i><i style="letter-spacing: 0.44px;">S</i><i style="letter-spacing: 0.25px;">Q</i><i style="letter-spacing: 0.42px;">L</i><i style="letter-spacing: 1.04px;"> </i><i style="letter-spacing: 1.31px;">D</i><i style="letter-spacing: 1.76px;">a</i><i style="letter-spacing: 1.76px;">t</i><i style="letter-spacing: 1.33px;">a</i><i style="letter-spacing: 1.34px;">b</i><i style="letter-spacing: 0.84px;">a</i><i style="letter-spacing: 0.86px;">s</i><i style="letter-spacing: 0.85px;">e</i><i style="letter-spacing: 0.09px;">s</i></div>
  <div class="hd-d" style="top: 44px; font-size: 14.56px;"><i style="letter-spacing: 0.23px; margin-left: -0.02px;">M</i><i style="letter-spacing: 0.62px;">a</i><i style="letter-spacing: 0.64px;">n</i><i style="letter-spacing: 0.65px;">a</i><i style="letter-spacing: 0.66px;">g</i><i style="letter-spacing: 0.46px;">e</i><i style="letter-spacing: 0.71px;"> </i><i style="letter-spacing: 0.75px;">y</i><i style="letter-spacing: 0.62px;">o</i><i style="letter-spacing: 0.84px;">u</i><i style="letter-spacing: 0.66px;">r</i><i style="letter-spacing: 0.19px;"> </i><i style="letter-spacing: 0.48px;">M</i><i style="letter-spacing: 0.1px;">y</i><i style="letter-spacing: -0.55px;">S</i><i style="letter-spacing: -0.3px;">Q</i><i style="letter-spacing: 0.05px;">L</i><i style="letter-spacing: 0.6px;"> </i><i style="letter-spacing: 0.65px;">d</i><i style="letter-spacing: 0.97px;">a</i><i style="letter-spacing: 0.96px;">t</i><i style="letter-spacing: 0.64px;">a</i><i style="letter-spacing: 0.65px;">b</i><i style="letter-spacing: 0.26px;">a</i><i style="letter-spacing: 0.27px;">s</i><i style="letter-spacing: 0.27px;">e</i><i style="letter-spacing: 0.22px;">s</i><i style="letter-spacing: 0.41px;">.</i><i style="letter-spacing: 0.07px;"> </i><i style="letter-spacing: -0.12px;">U</i><i style="letter-spacing: 0.28px;">s</i><i style="letter-spacing: 0.46px;">e</i><i style="letter-spacing: 0.59px;"> </i><i style="letter-spacing: 0.8px;">p</i><i style="letter-spacing: 0.8px;">h</i><i style="letter-spacing: 0.38px;">p</i><i style="letter-spacing: 0.48px;">M</i><i style="letter-spacing: 0.32px;">y</i><i style="letter-spacing: 0.21px;">A</i><i style="letter-spacing: 1.16px;">d</i><i style="letter-spacing: 1.09px;">m</i><i style="letter-spacing: 0.73px;">i</i><i style="letter-spacing: 0.59px;">n</i><i style="letter-spacing: 0.93px;"> </i><i style="letter-spacing: 0.97px;">t</i><i style="letter-spacing: 0.44px;">o</i><i style="letter-spacing: 0.59px;"> </i><i style="letter-spacing: 0.7px;">b</i><i style="letter-spacing: 0.55px;">r</i><i style="letter-spacing: 0.71px;">o</i><i style="letter-spacing: 0.48px;">w</i><i style="letter-spacing: 0.27px;">s</i><i style="letter-spacing: 0.46px;">e</i><i style="letter-spacing: 0.45px;"> </i><i style="letter-spacing: 0.64px;">a</i><i style="letter-spacing: 0.8px;">n</i><i style="letter-spacing: 0.6px;">d</i><i style="letter-spacing: 0.96px;"> </i><i style="letter-spacing: 1px;">m</i><i style="letter-spacing: 0.63px;">a</i><i style="letter-spacing: 0.63px;">n</i><i style="letter-spacing: 0.65px;">a</i><i style="letter-spacing: 0.66px;">g</i><i style="letter-spacing: 0.46px;">e</i><i style="letter-spacing: 0.6px;"> </i><i style="letter-spacing: 0.65px;">d</i><i style="letter-spacing: 0.97px;">a</i><i style="letter-spacing: 0.96px;">t</i><i style="letter-spacing: 0.64px;">a</i><i style="letter-spacing: 0.65px;">b</i><i style="letter-spacing: 0.26px;">a</i><i style="letter-spacing: 0.27px;">s</i><i style="letter-spacing: 0.47px;">e</i><i style="letter-spacing: 0.42px;"> </i><i style="letter-spacing: 0.45px;">c</i><i style="letter-spacing: 0.63px;">o</i><i style="letter-spacing: 1.12px;">n</i><i style="letter-spacing: 0.98px;">t</i><i style="letter-spacing: 0.65px;">e</i><i style="letter-spacing: 1.12px;">n</i><i style="letter-spacing: 0.93px;">t</i><i style="letter-spacing: 0.2px;">.</i></div>
  <div class="sep" style="top:80px"></div>
  <div class="inner" style="top:105px;height:165px">
    <div class="search"><svg class="ic" viewBox="0 0 24 24"><path d="m21 21-5.197-5.197m0 0A7.5 7.5 0 1 0 5.196 5.196a7.5 7.5 0 0 0 10.607 10.607Z"></path></svg><span style="font-size: 14.56px;"><i style="letter-spacing: -0.15px; margin-left: -0.41px;">S</i><i style="letter-spacing: 0.51px;">e</i><i style="letter-spacing: 0.55px;">a</i><i style="letter-spacing: 0.51px;">r</i><i style="letter-spacing: 0.61px;">c</i><i style="letter-spacing: 0.4px;">h</i></span></div>
    <div class="thead" style="top:59px"><div class="th" style="left: 24px; font-size: 14.7px; -webkit-text-stroke: 0.3px;"><i style="letter-spacing: 1.15px; margin-left: 0.51px;">D</i><i style="letter-spacing: 1.54px;">a</i><i style="letter-spacing: 1.54px;">t</i><i style="letter-spacing: 1.16px;">a</i><i style="letter-spacing: 1.16px;">b</i><i style="letter-spacing: 0.72px;">a</i><i style="letter-spacing: 0.75px;">s</i><i style="letter-spacing: 1.06px;">e</i><i style="letter-spacing: 0.95px;"> </i><i style="letter-spacing: 1.2px;">N</i><i style="letter-spacing: 1.4px;">a</i><i style="letter-spacing: 1.43px;">m</i><i style="letter-spacing: 0.66px;">e</i></div><div class="th" style="left: 399px; font-size: 14.7px; -webkit-text-stroke: 0.3px;"><i style="letter-spacing: 0.5px; margin-left: 0.15px;">S</i><i style="letter-spacing: 0.75px;">i</i><i style="letter-spacing: 1.07px;">z</i><i style="letter-spacing: 0.67px;">e</i></div>
      <svg class="abs ic" style="left:438px;top:18px;width:14px;height:14px;color:#71717b" viewBox="0 0 24 24"><path d="m19.5 8.25-7.5 7.5-7.5-7.5"></path></svg></div>
    <svg class="abs ic" style="left:24px;top:130px;width:16px;height:16px;color:#fe9a00" viewBox="0 0 24 24"><path d="M20.25 6.375c0 2.278-3.694 4.125-8.25 4.125S3.75 8.653 3.75 6.375m16.5 0c0-2.278-3.694-4.125-8.25-4.125S3.75 4.097 3.75 6.375m16.5 0v11.25c0 2.278-3.694 4.125-8.25 4.125s-8.25-1.847-8.25-4.125V6.375m16.5 0v3.75m-16.5-3.75v3.75m16.5 0v3.75C20.25 16.153 16.556 18 12 18s-8.25-1.847-8.25-4.125v-3.75m16.5 0c0 2.278-3.694 4.125-8.25 4.125s-8.25-1.847-8.25-4.125"></path></svg>
    <div class="abs" style="left: 44px; top: 127px; font-size: 14.56px; line-height: 20px; white-space: nowrap;"><i style="letter-spacing: 0.4px; margin-left: 0.39px;">u</i><i style="letter-spacing: 0.27px;">s</i><i style="letter-spacing: 0.72px;">e</i><i style="letter-spacing: -0.08px;">r</i><i style="letter-spacing: -0.07px;">_</i><i style="letter-spacing: 0.87px;">w</i><i style="letter-spacing: 0.8px;">p</i><i style="letter-spacing: 0.62px;">8</i><i style="letter-spacing: 0.62px;">c</i><i style="letter-spacing: 0.82px;">2</i><i style="letter-spacing: 0.66px;">0</i><i style="letter-spacing: 0.65px;">a</i><i style="letter-spacing: 0.41px;">0</i></div>
    <div class="abs" style="left: 399px; top: 128px; width: 53px; height: 20px; border-radius: 6px; background: rgb(250, 250, 250); box-shadow: rgb(228, 228, 231) 0px 0px 0px 1px inset; font-size: 12.48px; line-height: 20px; color: rgb(82, 82, 92); text-align: center; white-space: nowrap;"><i style="letter-spacing: 0.7px; margin-left: 0.35px;">7</i><i style="letter-spacing: 0.7px;">5</i><i style="letter-spacing: 0.52px;">2</i><i style="letter-spacing: -0.05px;"> </i><i style="letter-spacing: -0.26px;">K</i><i style="letter-spacing: -0.04px;">B</i></div>
    <div class="act-l" style="left:586px;top:127px;color:#155dfc"><svg class="ic" viewBox="0 0 24 24"><path d="M20.25 6.375c0 2.278-3.694 4.125-8.25 4.125S3.75 8.653 3.75 6.375m16.5 0c0-2.278-3.694-4.125-8.25-4.125S3.75 4.097 3.75 6.375m16.5 0v11.25c0 2.278-3.694 4.125-8.25 4.125s-8.25-1.847-8.25-4.125V6.375m16.5 0v3.75m-16.5-3.75v3.75m16.5 0v3.75C20.25 16.153 16.556 18 12 18s-8.25-1.847-8.25-4.125v-3.75m16.5 0c0 2.278-3.694 4.125-8.25 4.125s-8.25-1.847-8.25-4.125"></path></svg><span style="font-size: 14.56px;"><i style="letter-spacing: 0.79px; margin-left: 0.4px;">p</i><i style="letter-spacing: 0.79px;">h</i><i style="letter-spacing: 0.38px;">p</i><i style="letter-spacing: 0.48px;">M</i><i style="letter-spacing: 0.31px;">y</i><i style="letter-spacing: 0.21px;">A</i><i style="letter-spacing: 1.16px;">d</i><i style="letter-spacing: 1.09px;">m</i><i style="letter-spacing: 0.72px;">i</i><i style="letter-spacing: 0.39px;">n</i></span></div>
    <div class="act-l" style="left:710px;top:127px;color:#008236"><svg class="ic" viewBox="0 0 24 24"><path d="M3 16.5v2.25A2.25 2.25 0 0 0 5.25 21h13.5A2.25 2.25 0 0 0 21 18.75V16.5M16.5 12 12 16.5m0 0L7.5 12m4.5 4.5V3"></path></svg><span style="font-size: 14.56px;"><i style="letter-spacing: 0.2px; margin-left: -0.05px;">B</i><i style="letter-spacing: 0.45px;">a</i><i style="letter-spacing: 0.41px;">c</i><i style="letter-spacing: 0.59px;">k</i><i style="letter-spacing: 0.79px;">u</i><i style="letter-spacing: 0.4px;">p</i></span></div>
    <div class="act-l" style="left:793px;top:127px;color:#bb4d00"><svg class="ic" viewBox="0 0 24 24"><path d="M3 16.5v2.25A2.25 2.25 0 0 0 5.25 21h13.5A2.25 2.25 0 0 0 21 18.75V16.5m-13.5-9L12 3m0 0 4.5 4.5M12 3v13.5"></path></svg><span style="font-size: 14.56px;"><i style="letter-spacing: -0.45px; margin-left: -0.7px;">R</i><i style="letter-spacing: 0.27px;">e</i><i style="letter-spacing: 0.73px;">s</i><i style="letter-spacing: 0.95px;">t</i><i style="letter-spacing: 0.54px;">o</i><i style="letter-spacing: 0.57px;">r</i><i style="letter-spacing: 0.27px;">e</i></span></div>
    <div class="act-l" style="left:878px;top:127px;color:#e7000b"><svg class="ic" viewBox="0 0 24 24"><path d="m14.74 9-.346 9m-4.788 0L9.26 9m9.968-3.21c.342.052.682.107 1.022.166m-1.022-.165L18.16 19.673a2.25 2.25 0 0 1-2.244 2.077H8.084a2.25 2.25 0 0 1-2.244-2.077L4.772 5.79m14.456 0a48.108 48.108 0 0 0-3.478-.397m-12 .562c.34-.059.68-.114 1.022-.165m0 0a48.11 48.11 0 0 1 3.478-.397m7.5 0v-.916c0-1.18-.91-2.164-2.09-2.201a51.964 51.964 0 0 0-3.32 0c-1.18.037-2.09 1.022-2.09 2.201v.916m7.5 0a48.667 48.667 0 0 0-7.5 0"></path></svg><span style="font-size: 14.56px;"><i style="letter-spacing: 0.4px; margin-left: 0.13px;">D</i><i style="letter-spacing: 0.6px;">e</i><i style="letter-spacing: 0.59px;">l</i><i style="letter-spacing: 0.98px;">e</i><i style="letter-spacing: 0.98px;">t</i><i style="letter-spacing: 0.26px;">e</i></span></div>
  </div>
</div>

<!-- MySQL Users section -->
<div class="card" style="top:712px;height:300px">
  <svg class="hd-ic ic" style="top:28px" viewBox="0 0 24 24"><path d="M15 19.128a9.38 9.38 0 0 0 2.625.372 9.337 9.337 0 0 0 4.121-.952 4.125 4.125 0 0 0-7.533-2.493M15 19.128v-.003c0-1.113-.285-2.16-.786-3.07M15 19.128v.106A12.318 12.318 0 0 1 8.624 21c-2.331 0-4.512-.645-6.374-1.766l-.001-.109a6.375 6.375 0 0 1 11.964-3.07M12 6.375a3.375 3.375 0 1 1-6.75 0 3.375 3.375 0 0 1 6.75 0Zm8.25 2.25a2.625 2.625 0 1 1-5.25 0 2.625 2.625 0 0 1 5.25 0Z"></path></svg>
  <div class="hd-t" style="top: 16px; font-size: 16.8px; -webkit-text-stroke: 0.343px;"><i style="letter-spacing: 1.52px; margin-left: 0.97px;">M</i><i style="letter-spacing: 0.71px;">y</i><i style="letter-spacing: 0.44px;">S</i><i style="letter-spacing: 0.25px;">Q</i><i style="letter-spacing: 0.42px;">L</i><i style="letter-spacing: 0.89px;"> </i><i style="letter-spacing: 0.53px;">U</i><i style="letter-spacing: 0.85px;">s</i><i style="letter-spacing: 1.44px;">e</i><i style="letter-spacing: 0.78px;">r</i><i style="letter-spacing: 0.55px;">s</i><i style="letter-spacing: 1.37px;"> </i><i style="letter-spacing: 1.38px;">&amp;</i><i style="letter-spacing: 0.72px;"> </i><i style="letter-spacing: 0.95px;">P</i><i style="letter-spacing: 1.09px;">r</i><i style="letter-spacing: 0.96px;">i</i><i style="letter-spacing: 0.96px;">v</i><i style="letter-spacing: 0.83px;">i</i><i style="letter-spacing: 1.16px;">l</i><i style="letter-spacing: 1.35px;">e</i><i style="letter-spacing: 1.37px;">g</i><i style="letter-spacing: 0.86px;">e</i><i style="letter-spacing: 0.09px;">s</i></div>
  <div class="hd-d" style="top: 44px; font-size: 14.56px;"><i style="letter-spacing: 0.23px; margin-left: -0.02px;">M</i><i style="letter-spacing: 0.62px;">a</i><i style="letter-spacing: 0.64px;">n</i><i style="letter-spacing: 0.65px;">a</i><i style="letter-spacing: 0.66px;">g</i><i style="letter-spacing: 0.46px;">e</i><i style="letter-spacing: 0.6px;"> </i><i style="letter-spacing: 0.65px;">d</i><i style="letter-spacing: 0.96px;">a</i><i style="letter-spacing: 0.97px;">t</i><i style="letter-spacing: 0.65px;">a</i><i style="letter-spacing: 0.64px;">b</i><i style="letter-spacing: 0.25px;">a</i><i style="letter-spacing: 0.27px;">s</i><i style="letter-spacing: 0.47px;">e</i><i style="letter-spacing: 0.59px;"> </i><i style="letter-spacing: 0.41px;">u</i><i style="letter-spacing: 0.27px;">s</i><i style="letter-spacing: 0.72px;">e</i><i style="letter-spacing: 0.46px;">r</i><i style="letter-spacing: 0.21px;">s</i><i style="letter-spacing: 0.45px;"> </i><i style="letter-spacing: 0.63px;">a</i><i style="letter-spacing: 0.79px;">n</i><i style="letter-spacing: 0.61px;">d</i><i style="letter-spacing: 0.93px;"> </i><i style="letter-spacing: 1.11px;">t</i><i style="letter-spacing: 0.65px;">h</i><i style="letter-spacing: 0.59px;">e</i><i style="letter-spacing: 0.79px;">i</i><i style="letter-spacing: 0.66px;">r</i><i style="letter-spacing: 0.45px;"> </i><i style="letter-spacing: 0.46px;">a</i><i style="letter-spacing: 0.43px;">c</i><i style="letter-spacing: 0.47px;">c</i><i style="letter-spacing: 0.27px;">e</i><i style="letter-spacing: 0.02px;">s</i><i style="letter-spacing: 0.21px;">s</i><i style="letter-spacing: 0.61px;"> </i><i style="letter-spacing: 0.66px;">p</i><i style="letter-spacing: 0.59px;">e</i><i style="letter-spacing: 1.1px;">r</i><i style="letter-spacing: 1.09px;">m</i><i style="letter-spacing: 0.33px;">i</i><i style="letter-spacing: 0.02px;">s</i><i style="letter-spacing: 0.34px;">s</i><i style="letter-spacing: 0.56px;">i</i><i style="letter-spacing: 0.62px;">o</i><i style="letter-spacing: 0.41px;">n</i><i style="letter-spacing: 0.22px;">s</i><i style="letter-spacing: 0.93px;"> </i><i style="letter-spacing: 0.96px;">t</i><i style="letter-spacing: 0.44px;">o</i><i style="letter-spacing: 0.71px;"> </i><i style="letter-spacing: 0.75px;">y</i><i style="letter-spacing: 0.62px;">o</i><i style="letter-spacing: 0.84px;">u</i><i style="letter-spacing: 0.66px;">r</i><i style="letter-spacing: 0.6px;"> </i><i style="letter-spacing: 0.64px;">d</i><i style="letter-spacing: 0.97px;">a</i><i style="letter-spacing: 0.97px;">t</i><i style="letter-spacing: 0.65px;">a</i><i style="letter-spacing: 0.65px;">b</i><i style="letter-spacing: 0.24px;">a</i><i style="letter-spacing: 0.27px;">s</i><i style="letter-spacing: 0.28px;">e</i><i style="letter-spacing: 0.2px;">s</i><i style="letter-spacing: 0.2px;">.</i></div>
  <div class="sep" style="top:80px"></div>
  <div class="inner" style="top:105px;height:200px">
    <div class="search"><svg class="ic" viewBox="0 0 24 24"><path d="m21 21-5.197-5.197m0 0A7.5 7.5 0 1 0 5.196 5.196a7.5 7.5 0 0 0 10.607 10.607Z"></path></svg><span style="font-size: 14.56px;"><i style="letter-spacing: -0.15px; margin-left: -0.41px;">S</i><i style="letter-spacing: 0.51px;">e</i><i style="letter-spacing: 0.55px;">a</i><i style="letter-spacing: 0.51px;">r</i><i style="letter-spacing: 0.61px;">c</i><i style="letter-spacing: 0.4px;">h</i></span></div>
    <div class="thead" style="top:59px"><div class="th" style="left: 24px; font-size: 14.7px; -webkit-text-stroke: 0.3px;"><i style="letter-spacing: 0.46px; margin-left: 0.38px;">U</i><i style="letter-spacing: 0.74px;">s</i><i style="letter-spacing: 1.26px;">e</i><i style="letter-spacing: 0.59px;">r</i></div><div class="th" style="left: 326px; font-size: 14.7px; -webkit-text-stroke: 0.3px;"><i style="letter-spacing: 1.15px; margin-left: 0.51px;">D</i><i style="letter-spacing: 1.54px;">a</i><i style="letter-spacing: 1.54px;">t</i><i style="letter-spacing: 1.16px;">a</i><i style="letter-spacing: 1.16px;">b</i><i style="letter-spacing: 0.72px;">a</i><i style="letter-spacing: 0.75px;">s</i><i style="letter-spacing: 1.06px;">e</i><i style="letter-spacing: 0.62px;"> </i><i style="letter-spacing: 0.83px;">P</i><i style="letter-spacing: 0.95px;">r</i><i style="letter-spacing: 0.84px;">i</i><i style="letter-spacing: 0.84px;">v</i><i style="letter-spacing: 0.72px;">i</i><i style="letter-spacing: 1.02px;">l</i><i style="letter-spacing: 1.19px;">e</i><i style="letter-spacing: 1.19px;">g</i><i style="letter-spacing: 0.75px;">e</i><i style="letter-spacing: 0.09px;">s</i></div></div>
  </div>
</div>


</body></html>
